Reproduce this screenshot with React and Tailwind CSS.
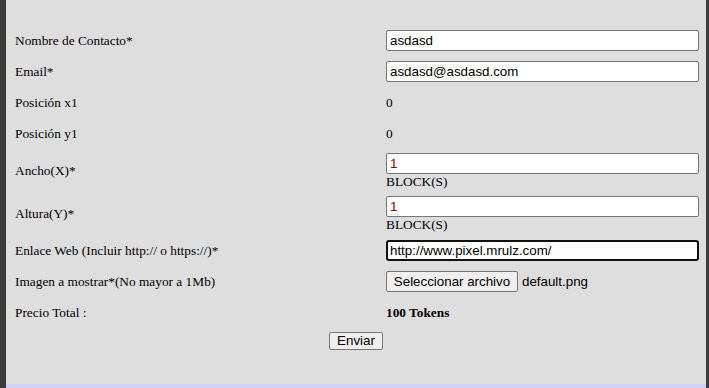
const serif = "font-['Liberation_Serif','Times_New_Roman',serif]"
const sans = "font-['Liberation_Sans',Arial,sans-serif]"

function TextInput({ value, focused, color = 'text-black' }) {
  return (
    <input
      type="text"
      readOnly
      value={value}
      className={`${sans} ${color} block h-[21px] w-[313px] bg-white px-[2px] text-[13.33px] outline-none ${
        focused
          ? 'rounded-[3px] border-2 border-[#101010] pl-[2px]'
          : 'rounded-[2px] border border-[#767676] pl-[3px]'
      }`}
    />
  )
}

function Row({ label, tall, children }) {
  return (
    <div className={`flex items-center ${tall ? 'h-[43px]' : 'h-[31px]'}`}>
      <div className={`${serif} w-[371px] shrink-0 text-[13.33px] text-black`}>{label}</div>
      <div className="flex flex-col text-[13.33px]">{children}</div>
    </div>
  )
}

export default function App() {
  return (
    <div className="h-[388px] w-[709px] overflow-hidden bg-[#3c3c3c]">
      <div className="ml-[6px] mr-[3px] flex h-[384px] flex-col bg-[#dedede] pl-[9px] pt-[25px]">
        <Row label="Nombre de Contacto*">
          <TextInput value="asdasd" />
        </Row>
        <Row label="Email*">
          <TextInput value="asdasd@asdasd.com" />
        </Row>
        <Row label="Posición x1">
          <span className={serif}>0</span>
        </Row>
        <Row label="Posición y1">
          <span className={serif}>0</span>
        </Row>
        <Row label="Ancho(X)*" tall>
          <TextInput value="1" color="text-[#8b0000]" />
          <div className={`${serif} h-[15px] leading-[15px]`}>BLOCK(S)</div>
        </Row>
        <Row label="Altura(Y)*" tall>
          <TextInput value="1" color="text-[#8b0000]" />
          <div className={`${serif} h-[15px] leading-[15px]`}>BLOCK(S)</div>
        </Row>
        <Row label="Enlace Web (Incluir http:// o https://)*">
          <TextInput value="http://www.pixel.mrulz.com/" focused />
        </Row>
        <Row label="Imagen a mostrar*(No mayor a 1Mb)">
          <div className={`${sans} flex items-center gap-[4px]`}>
            <button
              type="button"
              className="h-[21px] w-[132px] rounded-[2px] border border-[#767676] bg-[#efefef] text-[13.33px] text-black"
            >
              Seleccionar archivo
            </button>
            <span>default.png</span>
          </div>
        </Row>
        <Row label="Precio Total :">
          <span className={`${serif} font-bold`}>100 Tokens</span>
        </Row>
        <div className="flex h-[26px] items-center justify-center pr-[9px]">
          <button
            type="button"
            className={`${sans} h-[18px] w-[54px] rounded-[2px] border border-[#767676] bg-[#efefef] text-[13.33px] leading-none text-black`}
          >
            Enviar
          </button>
        </div>
      </div>
      <div className="ml-[6px] mr-[3px] h-[4px] bg-[#d0d0f4]" />
    </div>
  )
}
